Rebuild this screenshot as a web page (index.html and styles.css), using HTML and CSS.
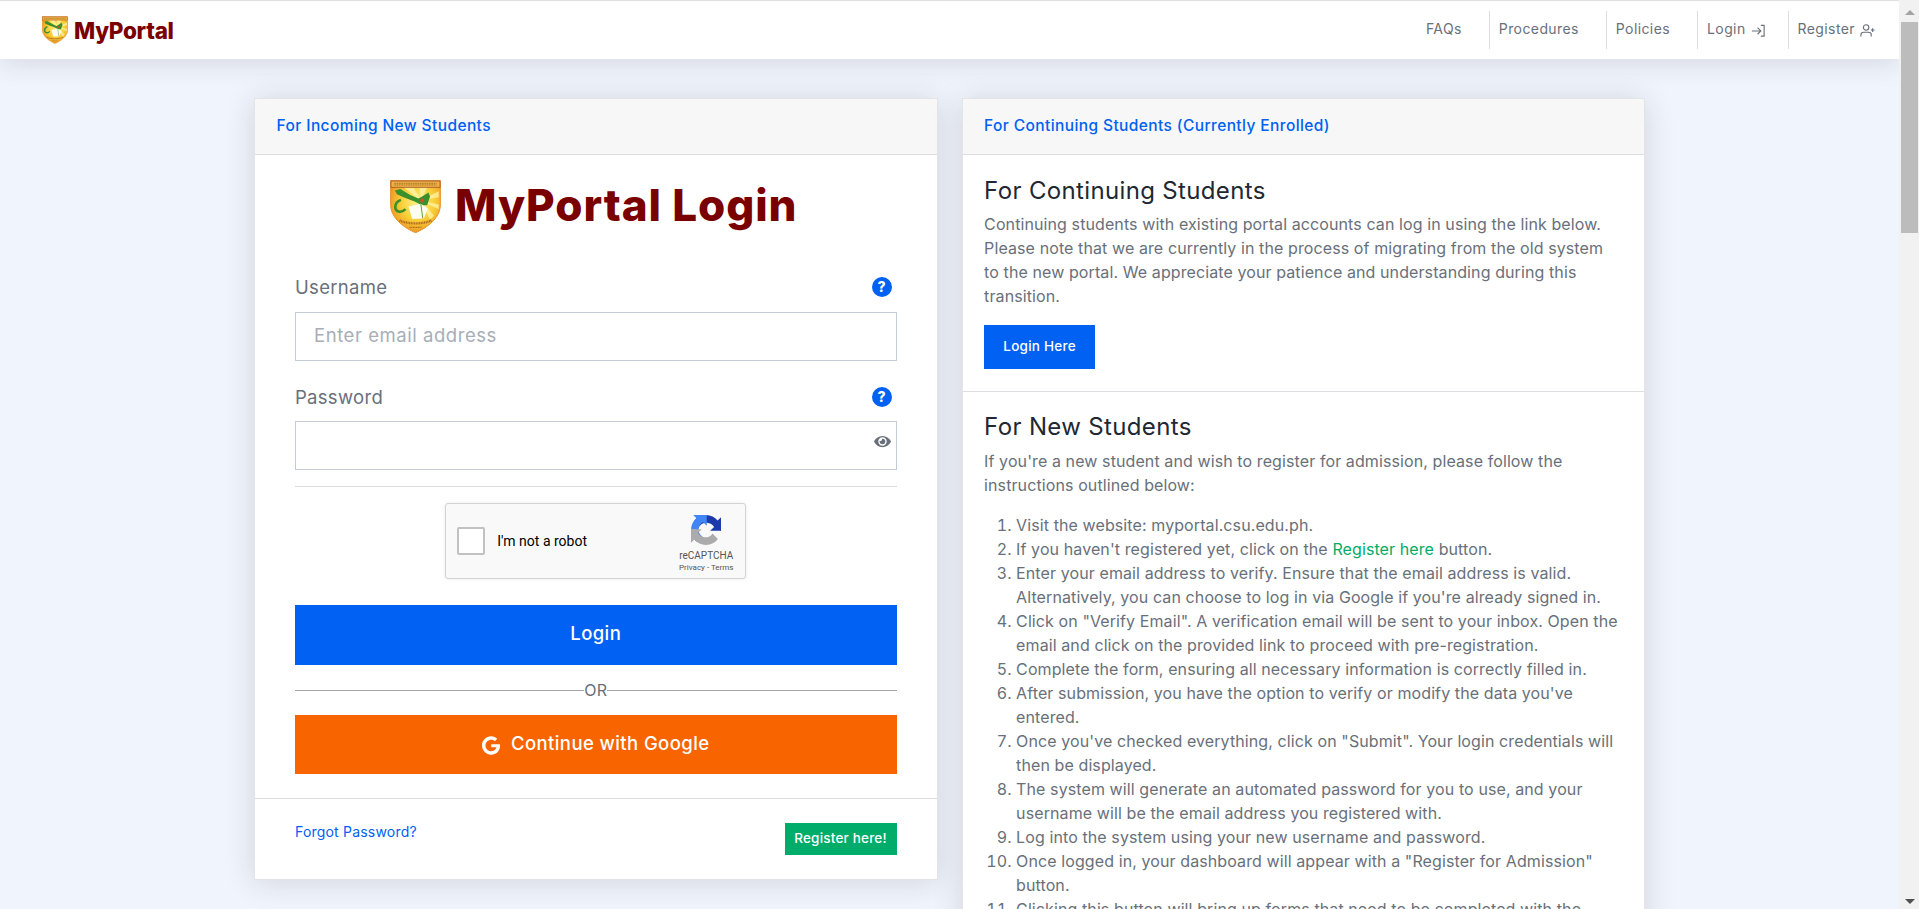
FILE: index.html
```html
<!DOCTYPE html>
<html lang="en">
<head>
<meta charset="utf-8">
<title>MyPortal Login</title>
<link rel="stylesheet" href="styles.css">
</head>
<body>
<svg class="defs" width="0" height="0" aria-hidden="true">
  <defs>
    <radialGradient id="sun" cx="55%" cy="42%" r="62%">
      <stop offset="0" stop-color="#fff38a"/>
      <stop offset="0.55" stop-color="#f8cf38"/>
      <stop offset="1" stop-color="#ec9220"/>
    </radialGradient>
    <symbol id="shield" viewBox="0 0 152 160">
      <path d="M1 2H151V75C151 115 110 145 76 159C42 145 1 115 1 75Z" fill="url(#sun)" stroke="#e58f2a" stroke-width="3"/>
      <path d="M92 62L40 22H70ZM92 62L88 22H112ZM92 62L146 34V52ZM92 62L146 88V74ZM92 62L120 120L132 108Z" fill="#fff7b0" opacity=".7"/>
      <rect x="2" y="3" width="148" height="19" fill="#eeb044" stroke="#a5552a" stroke-width="2.5"/>
      <path d="M12 10H140M12 15H140" stroke="#8a5a20" stroke-width="2" stroke-dasharray="5 2"/>
      <path d="M14 32L30 27L60 45L85 56L96 50L115 38L120 50L111 76L95 76L75 66L40 52L20 43Z" fill="#3b8f2c"/>
      <path d="M32 60C10 68 10 95 28 96C36 96 42 92 46 88" fill="none" stroke="#3b8f2c" stroke-width="8"/>
      <path d="M55 80L92 72L113 86L101 116L66 118Z" fill="#fdfdf0"/>
      <path d="M92 72L98 116" stroke="#5aa03c" stroke-width="3"/>
      <circle cx="96" cy="62" r="6" fill="#d0502a"/>
      <path d="M28 122C55 134 97 134 124 122" fill="none" stroke="#a8651c" stroke-width="7" stroke-dasharray="3 2"/>
      <path d="M58 143H94" stroke="#a8651c" stroke-width="4" stroke-dasharray="3 2"/>
    </symbol>
  </defs>
</svg>

<div class="shell">
<div class="viewport">
<nav class="topbar">
  <a class="brand" href="#">
    <svg class="brand-shield"><use href="#shield"/></svg>
    <span class="brand-text">MyPortal</span>
  </a>
  <ul class="nav-links">
    <li><a href="#">FAQs</a></li>
    <li><a href="#">Procedures</a></li>
    <li><a href="#">Policies</a></li>
    <li class="with-icon"><a href="#">Login
      <svg class="nav-icon" viewBox="0 0 16 16" fill="none" stroke="#69707a" stroke-width="1.2"><path d="M1 8.5H10M7 5L10.5 8.5L7 12M10.5 2.5H14V14H10.5"/></svg></a></li>
    <li class="with-icon"><a href="#">Register
      <svg class="nav-icon" viewBox="0 0 16 16" fill="none" stroke="#69707a" stroke-width="1.2"><circle cx="6.5" cy="4.8" r="2.9"/><path d="M1 14.5V12.5C1 10.8 2.5 9.8 4 9.8H9C10.5 9.8 12 10.8 12 12.5V14.5M11.5 7.5H15.5M13.5 5.5V9.5"/></svg></a></li>
  </ul>
</nav>

<main class="page">
  <section class="card">
    <header class="card-head">For Incoming New Students</header>
    <div class="login-body">
      <div class="login-logo">
        <svg class="logo-shield"><use href="#shield"/></svg>
        <span class="logo-text">MyPortal Login</span>
      </div>
      <div class="field-label"><label for="user">Username</label><span class="help">?</span></div>
      <input class="field" id="user" type="text" placeholder="Enter email address">
      <div class="field-label second"><label for="pass">Password</label><span class="help">?</span></div>
      <div class="pass-wrap">
        <input class="field" id="pass" type="password">
        <svg class="eye" viewBox="0 0 576 512"><path fill="#69707a" d="M572.5 241.4C518.3 135.6 410.9 64 288 64S57.7 135.6 3.5 241.4a32.4 32.4 0 0 0 0 29.2C57.7 376.4 165.1 448 288 448s230.3-71.6 284.5-177.4a32.4 32.4 0 0 0 0-29.2zM288 400a144 144 0 1 1 144-144 143.9 143.9 0 0 1-144 144zm0-240a95.3 95.3 0 0 0-25.3 3.8 47.9 47.9 0 0 1-66.9 66.9A95.8 95.8 0 1 0 288 160z"/></svg>
      </div>
      <hr class="rule">
      <div class="captcha">
        <span class="captcha-box"></span>
        <span class="captcha-label">I'm not a robot</span>
        <div class="captcha-brand">
          <svg class="captcha-logo" viewBox="0 0 64 64">
            <path d="M64 31.955l-.033-1.37V4.687l-7.16 7.16C50.948 4.674 42.033.093 32.05.093c-10.4 0-19.622 4.96-25.458 12.64l11.736 11.86a15.55 15.55 0 0 1 4.754-5.334c2.05-1.6 4.952-2.906 9.968-2.906.606 0 1.074.07 1.42.2 6.212.49 11.596 3.92 14.766 8.897l-8.306 8.307c10.52-.04 22.4-.066 23.37.2" fill="#1c3aa9"/>
            <path d="M31.88.001l-1.37.033H4.61l7.16 7.16C4.598 13.053.017 21.968.017 31.95c0 10.4 4.96 19.622 12.64 25.458l11.86-11.736a15.55 15.55 0 0 1-5.334-4.754c-1.6-2.05-2.906-4.952-2.906-9.968 0-.606.07-1.074.2-1.42.49-6.212 3.92-11.596 8.897-14.766l8.307 8.306c-.04-10.52-.066-22.4.2-23.37" fill="#4285f4"/>
            <path d="M.002 31.955l.033 1.37v25.9l7.16-7.16c5.86 7.173 14.775 11.754 24.757 11.754 10.4 0 19.622-4.96 25.458-12.64l-11.736-11.86a15.55 15.55 0 0 1-4.754 5.334c-2.05 1.6-4.952 2.906-9.968 2.906-.606 0-1.074-.07-1.42-.2-6.212-.49-11.596-3.92-14.766-8.897l8.306-8.307c-10.52.04-22.4.066-23.37-.2" fill="#ababab"/>
          </svg>
          <span class="captcha-name">reCAPTCHA</span>
          <span class="captcha-terms">Privacy - Terms</span>
        </div>
      </div>
      <button class="btn-wide btn-blue" type="button">Login</button>
      <div class="or"><span class="or-line"></span><span class="or-text">OR</span><span class="or-line"></span></div>
      <button class="btn-wide btn-orange" type="button">
        <svg class="google" viewBox="0 0 488 512"><path fill="#fff" d="M488 261.8C488 403.3 391.1 504 248 504 110.8 504 0 393.2 0 256S110.8 8 248 8c66.8 0 123 24.5 166.3 64.9l-67.5 64.9C258.5 52.6 94.3 116.6 94.3 256c0 86.5 69.1 156.6 153.7 156.6 98.2 0 135-70.4 140.8-106.9H248v-85.3h236.1c2.3 12.7 3.9 24.9 3.9 41.4z"/></svg>
        Continue with Google
      </button>
    </div>
    <footer class="login-foot">
      <a class="forgot" href="#">Forgot Password?</a>
      <a class="btn-green" href="#">Register here!</a>
    </footer>
  </section>

  <section class="card">
    <header class="card-head">For Continuing Students (Currently Enrolled)</header>
    <div class="info-block">
      <h2>For Continuing Students</h2>
      <p>Continuing students with existing portal accounts can log in using the link below. Please note that we are currently in the process of migrating from the old system to the new portal. We appreciate your patience and understanding during this transition.</p>
      <a class="btn-small" href="#">Login Here</a>
    </div>
    <div class="info-block steps">
      <h2>For New Students</h2>
      <p>If you're a new student and wish to register for admission, please follow the instructions outlined below:</p>
      <ol>
        <li>Visit the website: myportal.csu.edu.ph.</li>
        <li>If you haven't registered yet, click on the <a class="green-link" href="#">Register here</a> button.</li>
        <li>Enter your email address to verify. Ensure that the email address is valid. Alternatively, you can choose to log in via Google if you're already signed in.</li>
        <li>Click on "Verify Email". A verification email will be sent to your inbox. Open the email and click on the provided link to proceed with pre-registration.</li>
        <li>Complete the form, ensuring all necessary information is correctly filled in.</li>
        <li>After submission, you have the option to verify or modify the data you've entered.</li>
        <li>Once you've checked everything, click on "Submit". Your login credentials will then be displayed.</li>
        <li>The system will generate an automated password for you to use, and your username will be the email address you registered with.</li>
        <li>Log into the system using your new username and password.</li>
        <li>Once logged in, your dashboard will appear with a "Register for Admission" button.</li>
        <li>Clicking this button will bring up forms that need to be completed with the required information.</li>
      </ol>
    </div>
  </section>
</main>
</div>
<aside class="scrollbar" aria-hidden="true">
  <span class="sb-button sb-top"><span class="sb-up"></span></span>
  <span class="sb-thumb"></span>
  <span class="sb-button sb-bottom"><span class="sb-down"></span></span>
</aside>
</div>
</body>
</html>
```
FILE: styles.css
```css
* { box-sizing: border-box; }
html, body { margin: 0; height: 100%; }
body {
  background: #f0f4fc;
  color: #69707a;
  font-family: Inter, "Noto Sans", sans-serif;
  font-size: 16px;
  letter-spacing: .1px;
  line-height: 24px;
  overflow: hidden;
}
a { text-decoration: none; }
.defs { position: absolute; }
.shell { display: flex; height: 100vh; }
.viewport { flex: 1; min-width: 0; overflow: hidden; }

.scrollbar { width: 20px; flex: none; display: flex; flex-direction: column; background: #f1f1f1; padding: 0 1px 0 2px; }
.sb-button { display: flex; align-items: center; justify-content: center; flex: none; }
.sb-top { height: 22px; padding-top: 3px; }
.sb-up { border: 5px solid transparent; border-top: 0; border-bottom: 5px solid #a3a3a3; }
.sb-down { border: 5px solid transparent; border-bottom: 0; border-top: 5px solid #505050; }
.sb-thumb { height: 211px; background: #bcbcbc; flex: none; }
.sb-bottom { margin-top: auto; height: 16px; }

.topbar {
  position: relative;
  z-index: 2;
  height: 59px;
  border-top: 1px solid #e0e0e0;
  background: #fff;
  box-shadow: 0 2px 28px rgba(33, 40, 50, .15);
  display: flex;
  align-items: center;
  justify-content: space-between;
  padding: 0 24px 0 42px;
}
.brand { display: flex; align-items: center; gap: 6px; }
.brand-shield { width: 26px; height: 28px; }
.brand-text { font-size: 22.5px; font-weight: 800; color: #7a0000; letter-spacing: -.3px; line-height: 29px; }
.nav-links { display: flex; list-style: none; margin: 0; padding: 0; height: 38px; }
.nav-links li { display: flex; align-items: center; padding: 0 27px 2px 9px; border-left: 1px solid #dcdee2; }
.nav-links li:first-child { border-left: 0; }
.nav-links li.with-icon { padding-right: 22px; }
.nav-links li:last-child { padding-right: 0; }
.nav-links a { color: #69707a; font-size: 14px; font-weight: 400; letter-spacing: .4px; display: flex; align-items: center; gap: 5px; }
.nav-icon { width: 15px; height: 15px; margin-top: 2px; }

.page {
  display: grid;
  grid-template-columns: 1fr 1fr;
  gap: 24px;
  align-items: start;
  padding: 39px 254px 40px;
}
.card {
  background: #fff;
  border: 1px solid #e2e4e8;
  box-shadow: 0 2px 28px rgba(33, 40, 50, .15);
}
.card-head {
  height: 56px;
  display: flex;
  align-items: center;
  padding: 0 21.6px 2px;
  background: #f7f7f8;
  border-bottom: 1px solid #dcdee2;
  color: #0061f2;
  font-size: 15.5px;
  letter-spacing: .4px;
  font-weight: 500;
}
.login-body { padding: 25px 40px 24px; }
.login-logo { display: flex; align-items: center; justify-content: center; gap: 14px; height: 53px; padding-right: 4px; }
.logo-shield { width: 51px; height: 53px; }
.logo-text { font-size: 44px; font-weight: 800; color: #7a0000; letter-spacing: .9px; line-height: 51px; padding-bottom: 2px; }
.field-label {
  display: flex;
  justify-content: space-between;
  align-items: center;
  margin-top: 44px;
  height: 20px;
  padding-right: 5px;
  font-size: 18.5px;
  letter-spacing: .3px;
}
.field-label.second { margin-top: 26px; }
.help {
  width: 20px;
  height: 20px;
  border-radius: 50%;
  background: #0061f2;
  color: #fff;
  font-size: 14px;
  font-weight: 800;
  letter-spacing: 0;
  line-height: 20px;
  text-align: center;
}
.field {
  display: block;
  width: 100%;
  height: 49px;
  margin-top: 15px;
  padding: 0 18px 4px;
  border: 1px solid #c5ccd6;
  border-radius: 0;
  font: inherit;
  font-size: 18.5px;
  letter-spacing: .55px;
  color: #69707a;
  outline: 0;
}
.field::placeholder { color: #a7aeb8; opacity: 1; }
.pass-wrap { position: relative; }
.pass-wrap .field { margin-top: 14px; }
.eye { position: absolute; right: 6px; top: 13px; width: 17px; height: 15px; }
.rule { margin: 16px 0; border: 0; border-top: 1px solid #dcdee2; }
.captcha {
  display: flex;
  align-items: center;
  width: 301px;
  height: 76px;
  margin: 0 auto;
  padding: 0 10px 0 11px;
  background: #f9f9f9;
  border: 1px solid #d3d3d3;
  border-radius: 3px;
  box-shadow: 0 0 4px rgba(0, 0, 0, .08);
  font-family: Roboto, sans-serif;
  letter-spacing: 0;
}
.captcha-box { width: 28px; height: 28px; background: #fff; border: 2px solid #c1c1c1; border-radius: 2px; }
.captcha-label { margin-left: 12px; font-size: 14px; color: #000; flex: 1; }
.captcha-brand { display: flex; flex-direction: column; align-items: center; width: 58px; color: #555; align-self: flex-start; margin-top: 11px; }
.captcha-logo { width: 30px; height: 30px; }
.captcha-name { font-size: 10px; line-height: 13px; margin-top: 4px; }
.captcha-terms { font-size: 8px; line-height: 12px; white-space: nowrap; }
.btn-wide {
  display: flex;
  align-items: center;
  justify-content: center;
  width: 100%;
  height: 60px;
  border: 0;
  border-radius: 0;
  color: #fff;
  font: inherit;
  font-size: 18.5px;
  letter-spacing: .4px;
  font-weight: 500;
}
.btn-blue { background: #0061f2; margin-top: 26px; padding-bottom: 5px; }
.btn-orange { background: #f76400; gap: 11px; height: 59px; padding-bottom: 4px; }
.google { width: 18px; height: 19px; margin-top: 4px; }
.or { display: flex; align-items: center; height: 50px; font-size: 16px; letter-spacing: .3px; }
.or-line { flex: 1; height: 1px; background: #a6a6a6; }
.or-text { line-height: 16px; }
.login-foot {
  display: flex;
  justify-content: space-between;
  align-items: flex-start;
  padding: 24px 40px;
  border-top: 1px solid #dcdee2;
}
.forgot { color: #0061f2; font-size: 14px; letter-spacing: .2px; line-height: 18px; }
.btn-green {
  display: block;
  width: 112px;
  height: 32px;
  background: #00ac69;
  color: #fff;
  font-size: 13.5px;
  letter-spacing: .2px;
  font-weight: 500;
  line-height: 30px;
  text-align: center;
}
.info-block { padding: 21px 21.6px 22px; border-bottom: 1px solid #dcdee2; }
.info-block:last-child { border-bottom: 0; }
.steps { padding-top: 20px; }
h2 { margin: 0 0 7px; font-size: 24px; letter-spacing: .35px; font-weight: 400; line-height: 29px; color: #212832; }
.steps h2 { margin-bottom: 8px; }
p { margin: 0 0 16px; }
.btn-small {
  display: block;
  width: 111px;
  height: 44px;
  margin-top: 17px;
  background: #0061f2;
  color: #fff;
  font-size: 13.5px;
  letter-spacing: .25px;
  font-weight: 500;
  line-height: 42px;
  text-align: center;
}
ol { margin: 0 0 16px; padding-left: 32px; }
.green-link { color: #00ac69; }
```
